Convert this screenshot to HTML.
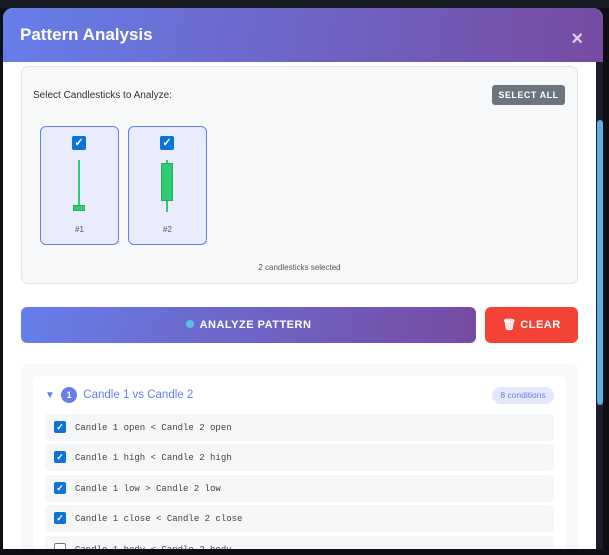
<!DOCTYPE html><html><head><style>
*{box-sizing:border-box;margin:0;padding:0}
body{width:609px;height:555px;background:#0d0f14;font-family:"Liberation Sans",sans-serif;position:relative;overflow:hidden}
.nav{position:absolute;top:0;left:0;width:609px;height:8px;background:#161a22}
.modal{position:absolute;left:3px;top:8px;width:600px;height:541px;background:#fff;border-radius:10px 10px 0 0;overflow:hidden}
.hdr{height:54px;background:linear-gradient(100deg,#667eea,#764ba2);position:relative}
.hdr h1{position:absolute;left:17px;top:17px;color:#fff;font-size:17px;font-weight:bold}
.x{position:absolute;right:20px;top:20px;color:#d8cfe8;font-size:20px;font-weight:bold}
.sb{position:absolute;right:0;top:54px;width:7px;height:487px;background:#1b1b2b}
.th{position:absolute;right:0;top:58px;width:6px;height:285px;background:#5dade2;border-radius:3px}
.sel{position:absolute;left:18px;top:58px;width:557px;height:218px;background:#f7f8fa;border:1px solid #e1e4e8;border-radius:7px}
.lbl{position:absolute;left:11px;top:23px;font-size:10px;color:#333}
.sa{position:absolute;right:12px;top:18px;width:73px;height:20px;background:#6c757d;color:#fff;font-size:9px;font-weight:bold;border-radius:3px;text-align:center;line-height:20px;letter-spacing:.5px}
.card{position:absolute;top:59px;width:79px;height:119px;background:#e8ecfd;border:1px solid #667eea;border-radius:6px}
.cb{position:absolute;width:14px;height:14px;background:#0b74d6;border-radius:2px;color:#fff;font-size:11px;text-align:center;line-height:14px;font-weight:bold}
.num{position:absolute;top:98px;width:100%;text-align:center;font-size:8px;color:#555}
.cnt{position:absolute;left:0;width:100%;top:196px;text-align:center;font-size:8px;color:#555}
.an{position:absolute;left:18px;top:299px;width:455px;height:36px;border-radius:6px;background:linear-gradient(100deg,#667eea,#764ba2);color:#fff;font-weight:bold;font-size:11px;text-align:center;line-height:36px;letter-spacing:.5px}
.cl{position:absolute;left:482px;top:299px;width:93px;height:36px;border-radius:6px;background:#f44336;color:#fff;font-weight:bold;font-size:11px;text-align:center;line-height:36px;letter-spacing:.5px}
.grp{position:absolute;left:18px;top:356px;width:557px;height:200px;background:#f7f8fa;border-radius:7px}
.inn{position:absolute;left:12px;top:12px;width:533px;height:200px;background:#fff;border-radius:6px}
.gh{position:absolute;left:12px;top:11px;font-size:11.5px;color:#667eea}
.badge{position:absolute;right:12px;top:11px;width:62px;height:17px;background:#e3e8fc;border-radius:9px;color:#667eea;font-size:8.5px;text-align:center;line-height:17px}
.row{position:absolute;left:12px;width:509px;height:27px;background:#f5f6f8;border-radius:3px}
.row span{position:absolute;left:30px;top:9px;font-family:"Liberation Mono",monospace;font-size:9px;color:#444}
.row .cb{left:9px;top:7px;width:12px;height:12px;font-size:9px;line-height:12px}
</style></head><body>
<div class="nav"></div>
<div class="modal">
<div class="hdr"><h1>Pattern Analysis</h1><div class="x">×</div></div>
<div class="sel">
<div class="lbl">Select Candlesticks to Analyze:</div>
<div class="sa">SELECT ALL</div>
<div class="card" style="left:18px"><div class="cb" style="left:31px;top:9px">✓</div>
<div style="position:absolute;left:37px;top:33px;width:2px;height:51px;background:#2ecc71"></div>
<div style="position:absolute;left:32px;top:78px;width:12px;height:6px;background:#2ecc71;border:1px solid #27ae60"></div>
<div class="num">#1</div></div>
<div class="card" style="left:106px"><div class="cb" style="left:31px;top:9px">✓</div>
<div style="position:absolute;left:37px;top:33px;width:2px;height:52px;background:#2ecc71"></div>
<div style="position:absolute;left:32px;top:36px;width:12px;height:38px;background:#2ecc71;border:1px solid #27ae60"></div>
<div class="num">#2</div></div>
<div class="cnt">2 candlesticks selected</div>
</div>
<div class="an"><span style="display:inline-block;width:8px;height:8px;border-radius:50%;background:#5bc0de;margin-right:6px"></span>ANALYZE PATTERN</div>
<div class="cl">🗑 CLEAR</div>
<div class="grp"><div class="inn">
<div class="gh"><span style="font-size:10px">▼</span> <span style="display:inline-block;width:16px;height:16px;border-radius:50%;background:#667eea;color:#fff;text-align:center;line-height:16px;font-size:9px;font-weight:bold;margin:0 3px">1</span> Candle 1 vs Candle 2</div>
<div class="badge">8 conditions</div>
<div class="row" style="top:38px"><div class="cb">✓</div><span>Candle 1 open &lt; Candle 2 open</span></div>
<div class="row" style="top:68px"><div class="cb">✓</div><span>Candle 1 high &lt; Candle 2 high</span></div>
<div class="row" style="top:99px"><div class="cb">✓</div><span>Candle 1 low &gt; Candle 2 low</span></div>
<div class="row" style="top:129px"><div class="cb">✓</div><span>Candle 1 close &lt; Candle 2 close</span></div>
<div class="row" style="top:160px"><div class="cb" style="background:#fff;border:1px solid #777"></div><span>Candle 1 body &lt; Candle 2 body</span></div>
</div></div>
<div class="sb"><div class="th"></div></div>
</div>
</body></html>
